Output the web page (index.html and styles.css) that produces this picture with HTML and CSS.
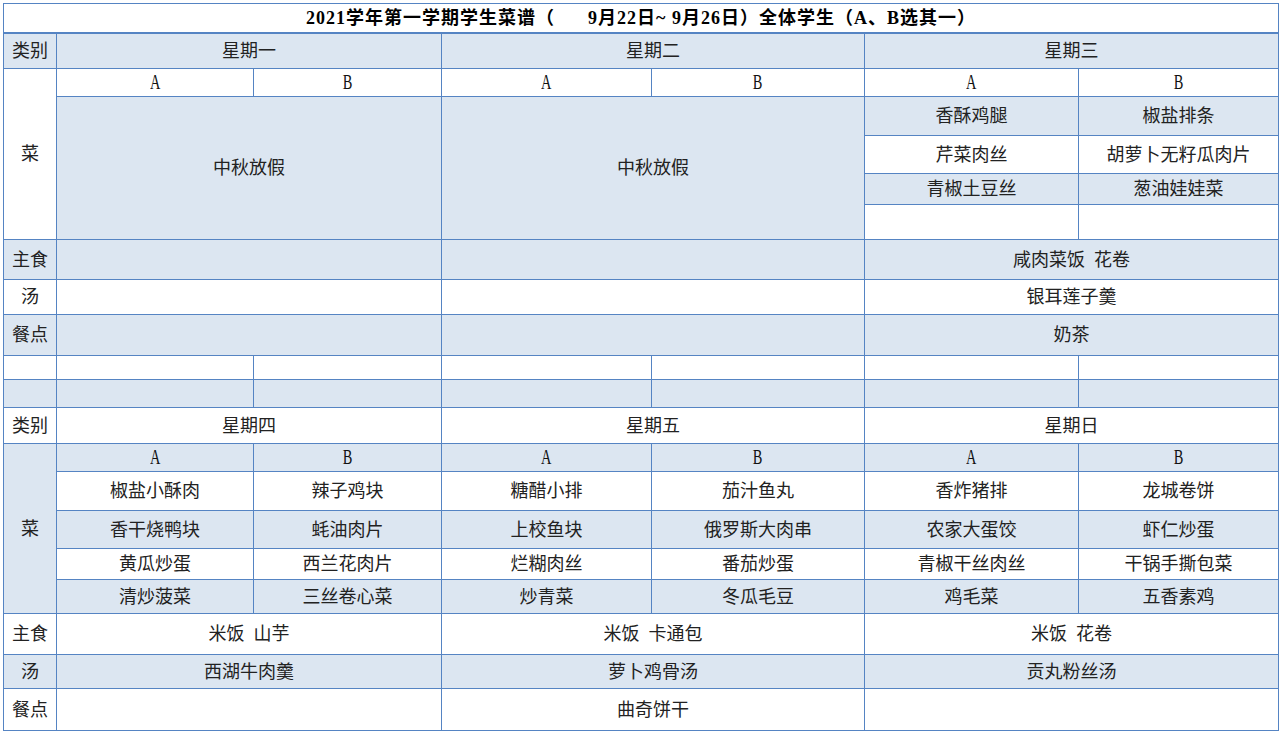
FILE: index.html
```html
<!DOCTYPE html>
<html lang="zh-CN">
<head>
<meta charset="utf-8">
<title>2021学年第一学期学生菜谱</title>
<link rel="stylesheet" href="styles.css">
</head>
<body>
<div class="sheet">
<table class="menu">
  <colgroup>
    <col class="c-label">
    <col class="c-1a"><col class="c-1b">
    <col class="c-2a"><col class="c-2b">
    <col class="c-3a"><col class="c-3b">
  </colgroup>
  <tbody>
    <tr class="r-title"><td colspan="7" class="title">2021学年第一学期学生菜谱（      9月22日~ 9月26日）全体学生（A、B选其一）</td></tr>

    <tr class="r-day blue"><td>类别</td><td colspan="2">星期一</td><td colspan="2">星期二</td><td colspan="2">星期三</td></tr>
    <tr class="r-ab"><td rowspan="5" class="white">菜</td><td><span class="latin">A</span></td><td><span class="latin">B</span></td><td><span class="latin">A</span></td><td><span class="latin">B</span></td><td><span class="latin">A</span></td><td><span class="latin">B</span></td></tr>
    <tr class="r-d1 blue"><td colspan="2" rowspan="4" class="blue">中秋放假</td><td colspan="2" rowspan="4" class="blue">中秋放假</td><td>香酥鸡腿</td><td>椒盐排条</td></tr>
    <tr class="r-d2"><td>芹菜肉丝</td><td>胡萝卜无籽瓜肉片</td></tr>
    <tr class="r-d3 blue"><td>青椒土豆丝</td><td>葱油娃娃菜</td></tr>
    <tr class="r-d4"><td></td><td></td></tr>
    <tr class="r-main blue"><td>主食</td><td colspan="2"></td><td colspan="2"></td><td colspan="2">咸肉菜饭&nbsp;&nbsp;花卷</td></tr>
    <tr class="r-soup"><td>汤</td><td colspan="2"></td><td colspan="2"></td><td colspan="2">银耳莲子羹</td></tr>
    <tr class="r-snack blue"><td>餐点</td><td colspan="2"></td><td colspan="2"></td><td colspan="2">奶茶</td></tr>
    <tr class="r-e1"><td></td><td></td><td></td><td></td><td></td><td></td><td></td></tr>
    <tr class="r-e2 blue"><td></td><td></td><td></td><td></td><td></td><td></td><td></td></tr>

    <tr class="r-day"><td>类别</td><td colspan="2">星期四</td><td colspan="2">星期五</td><td colspan="2">星期日</td></tr>
    <tr class="r-ab blue"><td rowspan="5" class="blue">菜</td><td><span class="latin">A</span></td><td><span class="latin">B</span></td><td><span class="latin">A</span></td><td><span class="latin">B</span></td><td><span class="latin">A</span></td><td><span class="latin">B</span></td></tr>
    <tr class="r-d1"><td>椒盐小酥肉</td><td>辣子鸡块</td><td>糖醋小排</td><td>茄汁鱼丸</td><td>香炸猪排</td><td>龙城卷饼</td></tr>
    <tr class="r-d2 blue"><td>香干烧鸭块</td><td>蚝油肉片</td><td>上校鱼块</td><td>俄罗斯大肉串</td><td>农家大蛋饺</td><td>虾仁炒蛋</td></tr>
    <tr class="r-d3"><td>黄瓜炒蛋</td><td>西兰花肉片</td><td>烂糊肉丝</td><td>番茄炒蛋</td><td>青椒干丝肉丝</td><td>干锅手撕包菜</td></tr>
    <tr class="r-d4b blue"><td>清炒菠菜</td><td>三丝卷心菜</td><td>炒青菜</td><td>冬瓜毛豆</td><td>鸡毛菜</td><td>五香素鸡</td></tr>
    <tr class="r-main2"><td>主食</td><td colspan="2">米饭&nbsp;&nbsp;山芋</td><td colspan="2">米饭&nbsp;&nbsp;卡通包</td><td colspan="2">米饭&nbsp;&nbsp;花卷</td></tr>
    <tr class="r-soup2 blue"><td>汤</td><td colspan="2">西湖牛肉羹</td><td colspan="2">萝卜鸡骨汤</td><td colspan="2">贡丸粉丝汤</td></tr>
    <tr class="r-snack2"><td>餐点</td><td colspan="2"></td><td colspan="2">曲奇饼干</td><td colspan="2"></td></tr>
  </tbody>
</table>
</div>
</body>
</html>
```

FILE: styles.css
```css
html, body {
  margin: 0;
  padding: 0;
  background: #ffffff;
}

.sheet {
  padding: 3px 0 0 3px;
}

.menu {
  border-collapse: collapse;
  table-layout: fixed;
  width: 1276px;
  font-family: "Liberation Serif", "Noto Sans CJK SC", sans-serif;
  font-size: 18px;
  color: #222222;
}

.c-label { width: 53px; }
.c-1a { width: 197px; }
.c-1b { width: 188px; }
.c-2a { width: 210px; }
.c-2b { width: 213px; }
.c-3a { width: 214px; }
.c-3b { width: 200px; }

.menu td {
  border: 1px solid #5584c3;
  padding: 0;
  text-align: center;
  vertical-align: middle;
  line-height: 20px;
  white-space: nowrap;
  overflow: hidden;
}

.menu tr.blue td,
.menu td.blue {
  background: #dce6f1;
}

.menu td.white {
  background: #ffffff;
}

.menu td.title {
  font-family: "Liberation Serif", "Noto Sans CJK SC", serif;
  font-weight: bold;
  font-size: 18px;
  letter-spacing: 1px;
  color: #000000;
  white-space: pre;
  border-bottom: 2px solid #5584c3;
}

.latin {
  display: inline-block;
  font-family: "Liberation Serif", serif;
  font-size: 20px;
  color: #111111;
  transform: scaleX(0.72);
}

.r-title { height: 29px; }
.r-day { height: 36px; }
.r-ab { height: 28px; }
.r-d1 { height: 39px; }
.r-d2 { height: 38px; }
.r-d3 { height: 31px; }
.r-d4 { height: 35px; }
.r-d4b { height: 34px; }
.r-main { height: 40px; }
.r-soup { height: 35px; }
.r-snack { height: 41px; }
.r-e1 { height: 24px; }
.r-e2 { height: 28px; }
.r-main2 { height: 41px; }
.r-soup2 { height: 34px; }
.r-snack2 { height: 42px; }
```
